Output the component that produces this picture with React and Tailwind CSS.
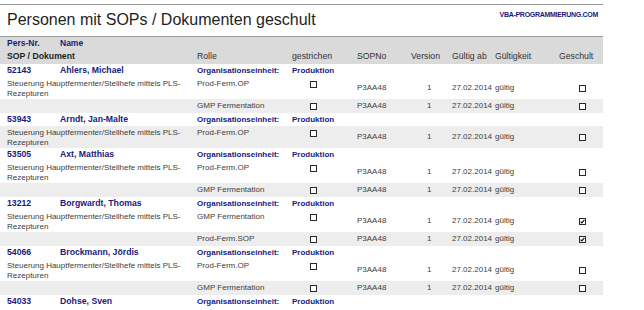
import React from 'react'

const PEOPLE = [
  {
    nr: '52143',
    name: 'Ahlers, Michael',
    rows: [
      { doc: true, rolle: 'Prod-Ferm.OP', gray: false, ok: false },
      { doc: false, rolle: 'GMP Fermentation', gray: true, ok: false },
    ],
  },
  {
    nr: '53943',
    name: 'Arndt, Jan-Malte',
    rows: [{ doc: true, rolle: 'Prod-Ferm.OP', gray: true, ok: false }],
  },
  {
    nr: '53505',
    name: 'Axt, Matthias',
    rows: [
      { doc: true, rolle: 'Prod-Ferm.OP', gray: false, ok: false },
      { doc: false, rolle: 'GMP Fermentation', gray: true, ok: false },
    ],
  },
  {
    nr: '13212',
    name: 'Borgwardt, Thomas',
    rows: [
      { doc: true, rolle: 'GMP Fermentation', gray: false, ok: true },
      { doc: false, rolle: 'Prod-Ferm.SOP', gray: true, ok: true },
    ],
  },
  {
    nr: '54066',
    name: 'Brockmann, Jördis',
    rows: [
      { doc: true, rolle: 'Prod-Ferm.OP', gray: false, ok: false },
      { doc: false, rolle: 'GMP Fermentation', gray: true, ok: false },
    ],
  },
  { nr: '54033', name: 'Dohse, Sven', rows: [] },
]

function Box({ checked }) {
  return (
    <div className="w-[7px] h-[7px] border border-[#2a2a2a] bg-white flex items-center justify-center">
      {checked && (
        <svg width="5" height="5" viewBox="0 0 5 5">
          <path d="M0.6 2.6 L1.9 3.9 L4.4 0.9" fill="none" stroke="#111" strokeWidth="1.2" />
        </svg>
      )}
    </div>
  )
}

function PersonRow({ nr, name }) {
  return (
    <div className="h-[13px] flex items-center pl-[7px] font-bold text-[#1a1a80]">
      <div className="w-[53px] text-[8.7px]">{nr}</div>
      <div className="w-[137px] text-[8.7px]">{name}</div>
      <div className="w-[95px] text-[8px]">Organisationseinheit:</div>
      <div className="text-[8px]">Produktion</div>
    </div>
  )
}

function DetailRow({ doc, rolle, gray, ok }) {
  const tall = doc
  return (
    <div
      className={`flex pl-[7px] text-[8px] text-[#404040] ${tall ? 'h-[22px]' : 'h-[14px]'} ${
        gray ? 'bg-[#ededed]' : 'bg-white'
      }`}
    >
      <div className={`w-[190px] leading-[10px] pr-[8px] ${tall ? 'pt-[2px]' : 'self-center'}`}>
        {doc ? 'Steuerung Hauptfermenter/Stellhefe mittels PLS-Rezepturen' : ''}
      </div>
      <div className={`w-[95px] leading-[10px] ${tall ? 'pt-[2px]' : 'self-center'}`}>{rolle}</div>
      <div className={`w-[65px] pl-[18px] ${tall ? 'pt-[4px]' : 'self-center'}`}>
        <Box checked={false} />
      </div>
      <div className="w-[54px] self-center">P3AA48</div>
      <div className="w-[41px] self-center pl-[16px]">1</div>
      <div className="w-[43px] self-center">27.02.2014</div>
      <div className="w-[64px] self-center">gültig</div>
      <div className="w-[44px] self-center pl-[20px]">
        <Box checked={ok} />
      </div>
    </div>
  )
}

export default function App() {
  return (
    <div className="w-[644px] h-[310px] bg-white overflow-hidden font-['Liberation_Sans',Arial,sans-serif]">
      <div className="w-[603px]">
        <div className="mt-[4px] h-px bg-[#9a9a9a]" />

        {/* Title */}
        <div className="h-[31px] flex items-start justify-between">
          <h1 className="pl-[7px] pt-[6px] text-[16px] leading-[18px] text-[#1e1e1e]">
            Personen mit SOPs / Dokumenten geschult
          </h1>
          <div className="pt-[5px] pr-[5px] text-[7px] leading-[9px] font-bold tracking-[-0.3px] text-[#1a1a80]">
            VBA-PROGRAMMIERUNG.COM
          </div>
        </div>

        {/* Column header */}
        <div className="border-t border-[#9a9a9a] bg-[#dadada]">
          <div className="h-[13px] flex items-center pl-[7px] text-[8.5px] font-bold text-[#1a1a80]">
            <div className="w-[53px]">Pers-Nr.</div>
            <div>Name</div>
          </div>
          <div className="h-[14px] flex items-center pl-[7px] text-[8.7px] text-[#333]">
            <div className="w-[190px] font-bold text-[#1e1e1e]">SOP / Dokument</div>
            <div className="w-[95px]">Rolle</div>
            <div className="w-[65px]">gestrichen</div>
            <div className="w-[54px]">SOPNo</div>
            <div className="w-[41px]">Version</div>
            <div className="w-[43px]">Gültig ab</div>
            <div className="w-[64px]">Gültigkeit</div>
            <div className="w-[44px]">Geschult</div>
          </div>
        </div>

        {/* Body */}
        {PEOPLE.map((p) => (
          <div key={p.nr}>
            <PersonRow nr={p.nr} name={p.name} />
            {p.rows.map((r, i) => (
              <DetailRow key={i} {...r} />
            ))}
          </div>
        ))}
      </div>
    </div>
  )
}
